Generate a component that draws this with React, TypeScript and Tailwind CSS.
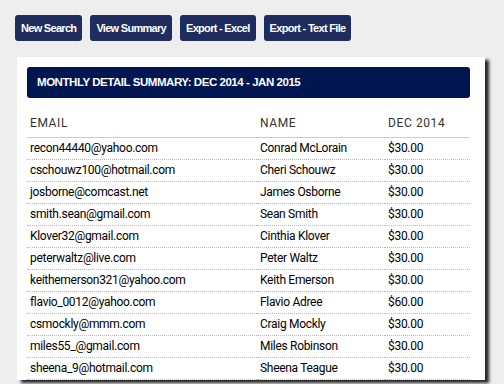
const rows = [
  ["recon44440@yahoo.com", "Conrad McLorain", "$30.00"],
  ["cschouwz100@hotmail.com", "Cheri Schouwz", "$30.00"],
  ["josborne@comcast.net", "James Osborne", "$30.00"],
  ["smith.sean@gmail.com", "Sean Smith", "$30.00"],
  ["Klover32@gmail.com", "Cinthia Klover", "$30.00"],
  ["peterwaltz@live.com", "Peter Waltz", "$30.00"],
  ["keithemerson321@yahoo.com", "Keith Emerson", "$30.00"],
  ["flavio_0012@yahoo.com", "Flavio Adree", "$60.00"],
  ["csmockly@mmm.com", "Craig Mockly", "$30.00"],
  ["miles55_@gmail.com", "Miles Robinson", "$30.00"],
  ["sheena_9@hotmail.com", "Sheena Teague", "$30.00"],
];

const buttons = ["New Search", "View Summary", "Export - Excel", "Export - Text File"];

export default function App() {
  return (
    <div className="h-[384px] w-[504px] overflow-hidden bg-[#eeeeee]">
      {/* toolbar */}
      <div className="flex gap-2 px-[15px] pt-[15px]">
        {buttons.map((b) => (
          <button
            key={b}
            className="h-[26px] rounded-[3px] bg-[#1f2d5e] px-[6px] text-[11px] font-bold tracking-[-0.7px] text-white [font-family:'Liberation_Sans',Arial,sans-serif]"
          >
            {b}
          </button>
        ))}
      </div>

      {/* card */}
      <div className="ml-[17px] mt-4 w-[468px] bg-white pl-[10px] pr-[15px] pt-[10px] shadow-[4px_3px_3px_rgba(0,0,0,0.85)]">
        <div className="flex h-[31px] items-center rounded-[3px] bg-[#001651] px-[10px] text-[11.5px] font-bold tracking-[-0.45px] text-white [font-family:'Liberation_Sans',Arial,sans-serif]">
          MONTHLY DETAIL SUMMARY: DEC 2014 - JAN 2015
        </div>

        <table className="mt-[12px] w-full border-collapse text-[12px] [font-family:Roboto,sans-serif]">
          <thead>
            <tr className="border-b border-[#cccccc] text-left text-[#333333]">
              <th className="h-[27px] w-[230px] pl-[3px] align-middle font-normal tracking-[0.6px]">EMAIL</th>
              <th className="h-[27px] w-[128px] pl-[3px] align-middle font-normal tracking-[0.6px]">NAME</th>
              <th className="h-[27px] pl-[3px] align-middle font-normal tracking-[0.6px]">DEC 2014</th>
            </tr>
          </thead>
          <tbody>
            {rows.map(([email, name, amt]) => (
              <tr key={email} className="h-[22px] border-b border-dotted border-[#bbbbbb] tracking-[-0.3px] text-black">
                <td className="pl-[3px]">{email}</td>
                <td className="pl-[3px]">{name}</td>
                <td className="pl-[3px]">{amt}</td>
              </tr>
            ))}
          </tbody>
        </table>
      </div>
    </div>
  );
}
